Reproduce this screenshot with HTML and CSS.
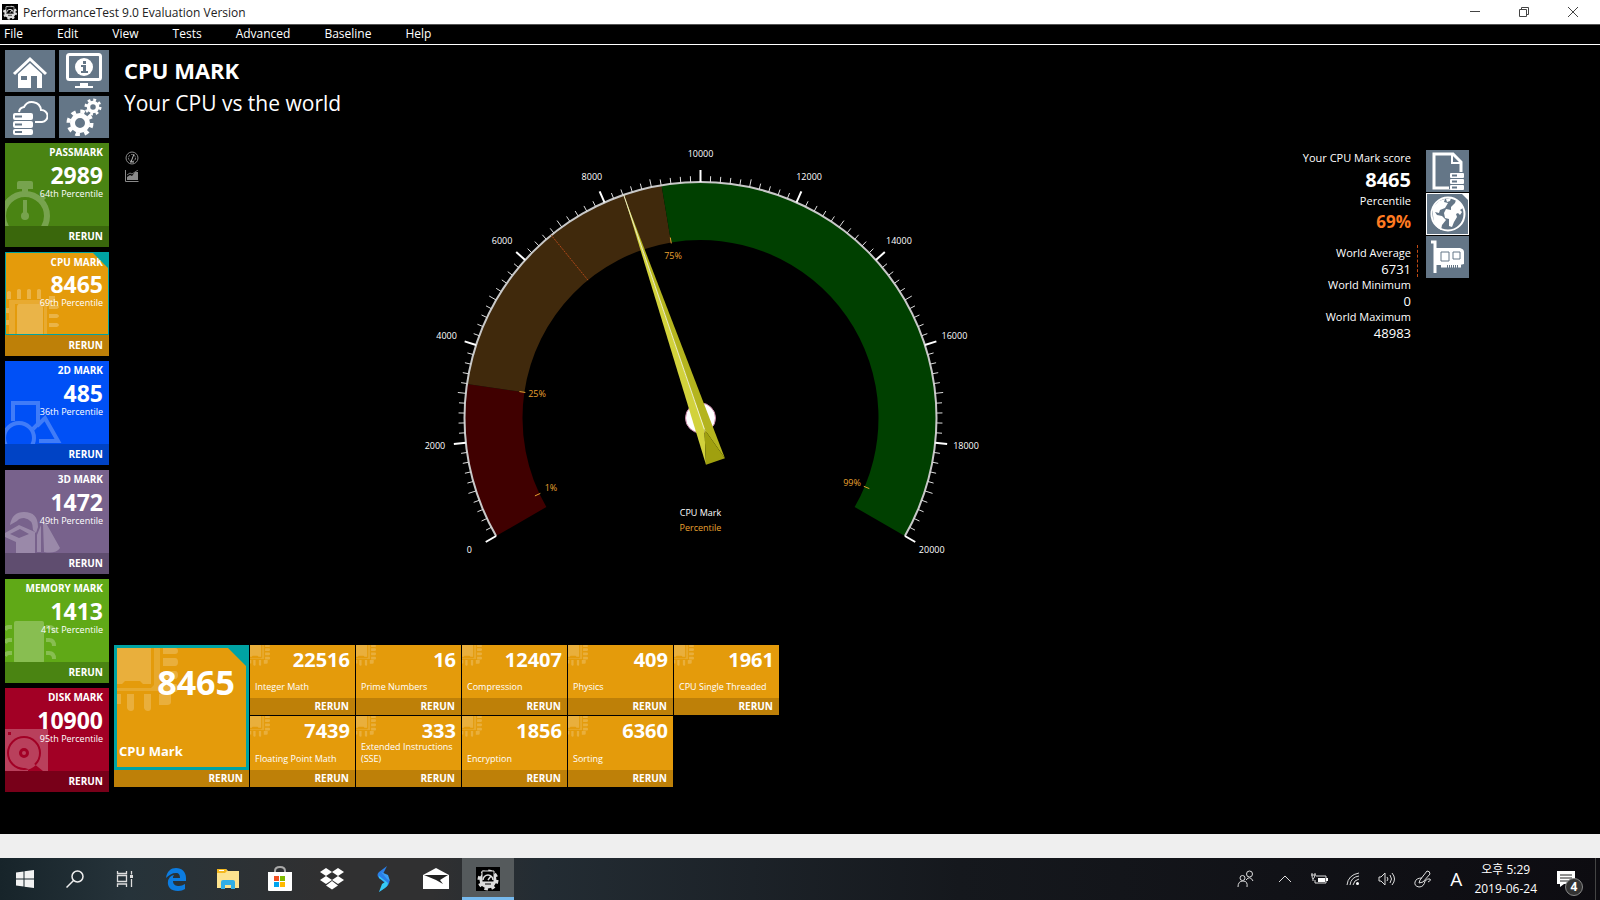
FILE: index.html
```
<!DOCTYPE html>
<html lang="en">
<head>
    <meta charset="UTF-8">
    <meta name="viewport" content="width=device-width, initial-scale=1.0">
    <title>PerformanceTest 9.0 Evaluation Version</title>
    <link rel="stylesheet" href="styles.css">
</head>
<body>
    <!-- shared icons -->
    <svg class="defs" width="0" height="0">
        <symbol id="chip" viewBox="0 0 64 64">
            <path d="M0 0h34v36h-8l-3-3h-15l-3 3h-5z"/>
            <path d="M37 0h6v43h-43v-3h34l3-3z" opacity=".7"/>
            <path d="M46 0h12q3 0 3 3t-3 3h-12zM46 10h12q3 0 3 4t-3 4h-12zM46 23h12q3 0 3 4t-3 4h-12zM46 36h12q3 0 3 4t-3 4h-12z"/>
            <path d="M0 46h4v10h-4zM10 46h7v14q0 3-3 3t-4-3zM27 46h7v14q0 3-3 3t-4-3zM42 46h12v8q0 3-4 3h-8z"/>
        </symbol>
        <symbol id="logo" viewBox="0 0 24 24">
            <path d="M0 0h24v24h-24z" fill="#000"/>
            <circle cx="12" cy="13" r="7" fill="none" stroke="#ddd" stroke-width="3"/>
            <circle cx="12" cy="13" r="9" fill="none" stroke="#ddd" stroke-width="3" stroke-dasharray="3.5 3.57"/>
            <path d="M6 4h12v11h-12z" fill="#000" stroke="#ddd"/>
            <path d="M7 13a5 5 0 0 1 10 0M12 13l3-4" fill="none" stroke="#ddd" stroke-width="1.5"/>
            <path d="M5 15h14l-3 4h-8z" fill="#ddd"/>
            <path d="M9 17h6" stroke="#000"/>
        </symbol>
    </svg>

    <header class="titlebar">
        <svg class="app-icon" width="16" height="16"><use href="#logo"/></svg>
        <span>PerformanceTest 9.0 Evaluation Version</span>
        <div class="window-buttons">
            <button aria-label="Minimize"><svg width="12" height="12"><path d="M1 5.5h10"/></svg></button>
            <button aria-label="Restore"><svg width="12" height="12"><path d="M1.500 3.500h7v7h-7zM3.500 3.500v-2h7v7h-2"/></svg></button>
            <button aria-label="Close"><svg width="12" height="12"><path d="M1 1l10 10M11 1l-10 10"/></svg></button>
        </div>
    </header>

    <nav class="menu">
        <button>File</button>
        <button>Edit</button>
        <button>View</button>
        <button>Tests</button>
        <button>Advanced</button>
        <button>Baseline</button>
        <button>Help</button>
    </nav>

    <main>
        <aside class="sidebar">
            <div class="nav-grid">
                <button class="square" aria-label="Home">
                    <svg width="36" height="36" viewBox="0 0 36 36">
                        <path d="M2 21L18 6l16 15" fill="none" stroke="#fff" stroke-width="3"/>
                        <path d="M6 21L18 10l12 11v14h-5v-12h-6v12h-13z" fill="#fff"/>
                        <path d="M9 23h6v4h-6z" fill="#647687"/>
                    </svg>
                </button>
                <button class="square" aria-label="System information">
                    <svg width="36" height="36" viewBox="0 0 36 36">
                        <rect x="1.500" y="1.500" width="33" height="25" rx="2" fill="none" stroke="#fff" stroke-width="3"/>
                        <circle cx="18" cy="14" r="9" fill="#fff"/>
                        <path d="M14 30h8v3h5v2h-18v-2h5z" fill="#fff"/>
                        <path d="M17 8h3v3h-3zM15 12h5v6h2v2h-7v-2h2v-4h-2z" fill="#647687"/>
                    </svg>
                </button>
                <button class="square" aria-label="Manage baselines">
                    <svg width="36" height="36" viewBox="0 0 36 36">
                        <path d="M7 13a6 6 0 0 1 5-5a9 9 0 0 1 17 3a6 6 0 0 1 1 12h-7" fill="none" stroke="#fff" stroke-width="2"/>
                        <g fill="#fff">
                            <rect x="1" y="14" width="20" height="7" rx="2"/>
                            <rect x="1" y="22" width="20" height="7" rx="2"/>
                            <rect x="1" y="30" width="20" height="6" rx="2"/>
                        </g>
                        <path d="M3 17.500h7M3 25.500h7M3 33h7" stroke="#647687" stroke-width="2"/>
                    </svg>
                </button>
                <button class="square" aria-label="Settings">
                    <svg width="36" height="38" viewBox="0 0 36 38" fill="none" stroke="#fff">
                        <circle cx="14" cy="25" r="7.500" stroke-width="5"/>
                        <circle cx="14" cy="25" r="11.500" stroke-width="4" stroke-dasharray="4.500 4.530"/>
                        <circle cx="27" cy="9" r="4.500" stroke-width="3.500"/>
                        <circle cx="27" cy="9" r="7" stroke-width="3" stroke-dasharray="2.750 2.750"/>
                    </svg>
                </button>
            </div>

            <section class="mark passmark">
                <button class="mark-body">
                    <svg class="art" width="60" height="48" viewBox="0 36 60 48">
                        <path d="M14 39h12q2 0 2 2v6h-5v4h-6v-4h-5v-6q0-2 2-2zM37 52l4 4l-3 3l-4-4z"/>
                        <circle cx="20" cy="74" r="22" fill="none" stroke="#fff" stroke-width="6"/>
                        <path d="M18 58h4v13h-4z"/>
                        <circle cx="20" cy="74" r="4"/>
                    </svg>
                    <span class="mark-name">PASSMARK</span>
                    <span class="mark-score">2989</span>
                    <span class="mark-rank">64th Percentile</span>
                </button>
                <button class="rerun">RERUN</button>
            </section>

            <section class="mark cpu active">
                <button class="mark-body">
                    <svg class="art" width="60" height="48" viewBox="0 36 60 48">
                        <path d="M11 40q2-2 4 0v9h-4zM21 40q2-2 4 0v9h-4zM31 40q2-2 4 0v9h-4zM1 42q2-2 4 0v7h-4z"/>
                        <path d="M3 50h38v34h-38zM9 54v30h29v-27l-3-3z" fill-rule="evenodd" opacity=".6"/>
                        <path d="M13 54h20q4 0 4 4v26h-26v-26q0-4 2-4z"/>
                        <path d="M43 46h6v6h-6zM43 55h8q4 2 0 4h-8zM43 64h8q4 2 0 4h-8zM43 73h8q4 2 0 4h-8zM0 58h3v5h-3zM0 70h3v5h-3z"/>
                    </svg>
                    <span class="mark-name">CPU MARK</span>
                    <span class="mark-score">8465</span>
                    <span class="mark-rank">69th Percentile</span>
                </button>
                <button class="rerun">RERUN</button>
            </section>

            <section class="mark g2d">
                <button class="mark-body">
                    <svg class="art" width="60" height="48" viewBox="0 36 60 48">
                        <g fill="none" stroke="#fff" stroke-width="4">
                            <path d="M8 61v-18h25v21l-5 5"/>
                            <circle cx="14" cy="78" r="15"/>
                            <path d="M32 66l8-8l13 23h-19"/>
                        </g>
                    </svg>
                    <span class="mark-name">2D MARK</span>
                    <span class="mark-score">485</span>
                    <span class="mark-rank">36th Percentile</span>
                </button>
                <button class="rerun">RERUN</button>
            </section>

            <section class="mark g3d">
                <button class="mark-body">
                    <svg class="art" width="60" height="48" viewBox="0 36 60 48">
                        <path d="M5 56q2-13 14-13q14 0 14 15l-2 6l-3-3q0-11-9-12q-5 0-7 3z"/>
                        <path d="M0 64l14-8l16 7v21h-19v-11l-11-5zM5 65l9 4l10-4l-9-5z" fill-rule="evenodd"/>
                        <path d="M38 54h3l14 25q-4 6-16 4zM36 56v27h-4v-17z"/>
                    </svg>
                    <span class="mark-name">3D MARK</span>
                    <span class="mark-score">1472</span>
                    <span class="mark-rank">49th Percentile</span>
                </button>
                <button class="rerun">RERUN</button>
            </section>

            <section class="mark memory">
                <button class="mark-body">
                    <svg class="art" width="60" height="48" viewBox="0 36 60 48">
                        <rect x="9" y="43" width="30" height="42" rx="2"/>
                        <path d="M0 52q1-3 4-3h3M0 65q1-3 4-3h3M0 78q1-3 4-3h3M41 49h3q5 0 5 6M41 62h3q5 0 5 6M41 75h3q5 0 5 6" fill="none" stroke="#fff" stroke-width="4"/>
                    </svg>
                    <span class="mark-name">MEMORY MARK</span>
                    <span class="mark-score">1413</span>
                    <span class="mark-rank">41st Percentile</span>
                </button>
                <button class="rerun">RERUN</button>
            </section>

            <section class="mark disk">
                <button class="mark-body">
                    <svg class="art" width="60" height="48" viewBox="0 36 60 48">
                        <path d="M0 42h43v42h-5l-10-8q-6-2-11-1q-3 2 0 5l6 2v2h-23zM3 45v3h3v-3zM19 49a17 17 0 1 0 17 17a17 17 0 0 0-17-17z" fill-rule="evenodd"/>
                        <path d="M19 51a15 15 0 1 0 0 30a15 15 0 1 0 0-30zM19 61a5 5 0 1 1 0 10a5 5 0 1 1 0-10z" fill-rule="evenodd"/>
                        <circle cx="19" cy="66" r="2"/>
                    </svg>
                    <span class="mark-name">DISK MARK</span>
                    <span class="mark-score">10900</span>
                    <span class="mark-rank">95th Percentile</span>
                </button>
                <button class="rerun">RERUN</button>
            </section>
        </aside>

        <div class="content">
            <div class="heading">
                <h1>CPU MARK</h1>
                <h2>Your CPU vs the world</h2>
            </div>

            <div class="dashboard">
                <div class="chart-types">
                    <button aria-label="Gauge">
                        <svg width="14" height="14" viewBox="0 0 14 14" fill="none" stroke="#8a8a8a">
                            <circle cx="7" cy="7" r="6"/>
                            <circle cx="7" cy="7" r="3.500" stroke-dasharray="2 1"/>
                            <path d="M6 11l3-8M5 11h4" stroke="#bbb"/>
                        </svg>
                    </button>
                    <button aria-label="Distribution">
                        <svg width="14" height="12" viewBox="0 0 14 12">
                            <path d="M.5 0v11.500h13" fill="none" stroke="#8a8a8a"/>
                            <path d="M2 10v-3l3-2l2 1l3-4h3v8z" fill="#8a8a8a"/>
                            <path d="M2 5l3-2l2 1l6-4" fill="none" stroke="#777"/>
                        </svg>
                    </button>
                </div>

                <div class="gauge">
                    <svg id="gauge" width="560" height="430" viewBox="0 0 560 430"></svg>
                </div>

                <div class="score-panel">
                    <dl class="scores">
                        <dt>Your CPU Mark score</dt>
                        <dd class="score">8465</dd>
                        <dt>Percentile</dt>
                        <dd class="percentile">69%</dd>
                        <div class="average">
                            <dt>World Average</dt>
                            <dd>6731</dd>
                        </div>
                        <dt>World Minimum</dt>
                        <dd>0</dd>
                        <dt>World Maximum</dt>
                        <dd>48983</dd>
                    </dl>
                    <div class="compare">
                        <button class="square" aria-label="Baselines">
                            <svg width="34" height="38" viewBox="0 0 34 38">
                                <path d="M3 2h19l8 8v26h-27z" fill="none" stroke="#fff" stroke-width="3"/>
                                <path d="M21 2v9h9" fill="none" stroke="#fff" stroke-width="2"/>
                                <path d="M18 20h14v17h-14z" fill="#647687"/>
                                <g fill="#fff">
                                    <rect x="19" y="21" width="14" height="5" rx="1"/>
                                    <rect x="19" y="27" width="14" height="5" rx="1"/>
                                    <rect x="19" y="33" width="14" height="5" rx="1"/>
                                </g>
                                <path d="M21 23.500h5M21 29.500h5M21 35.500h5" stroke="#647687" stroke-width="2"/>
                            </svg>
                        </button>
                        <button class="square selected" aria-label="World">
                            <svg width="38" height="38" viewBox="0 0 38 38">
                                <circle cx="19" cy="19" r="16.500" fill="none" stroke="#fff" stroke-width="2"/>
                                <path d="M4 12l6-6l6-2l-1 3l4 1l-3 5l-5 2l-1 3l-4-1l2 3l5 1l4 4l-4 5l-1 5q-8-4-8-15zM17 4l5-1l-1 3l-3 1zM22 12l4-4l1-3q6 3 7 8l-3 2l2 2l-2 3l-2-2l-2 1l1 3l-3 5l-2 5l-3-1v-7l-4-1l-1-5l2-4l5 1z" fill="#fff"/>
                            </svg>
                        </button>
                        <button class="square" aria-label="Hardware">
                            <svg width="38" height="38" viewBox="0 0 38 38">
                                <path d="M2 4h4v31" fill="none" stroke="#fff" stroke-width="3"/>
                                <path d="M7 10h24q4 1 4 4v12l-4 1h-24z" fill="#fff"/>
                                <path d="M12 28h20" stroke="#fff" stroke-width="3" stroke-dasharray="6 1 1 1 1 1 1 1 1 1 1 1"/>
                                <path d="M12 14h8v9h-8zM24 14h7v7h-7z" fill="#fff" stroke="#647687"/>
                            </svg>
                        </button>
                    </div>
                </div>
            </div>

            <div class="tests">
                <section class="test main-test">
                    <button class="test-body">
                        <svg class="chip" width="64" height="64"><use href="#chip"/></svg>
                        <span class="test-score">8465</span>
                        <span class="test-name">CPU Mark</span>
                    </button>
                    <button class="rerun">RERUN</button>
                </section>
                <section class="test">
                    <button class="test-body">
                        <svg class="chip" width="21" height="21"><use href="#chip"/></svg>
                        <span class="test-score">22516</span>
                        <span class="test-name">Integer Math</span>
                    </button>
                    <button class="rerun">RERUN</button>
                </section>
                <section class="test">
                    <button class="test-body">
                        <svg class="chip" width="21" height="21"><use href="#chip"/></svg>
                        <span class="test-score">16</span>
                        <span class="test-name">Prime Numbers</span>
                    </button>
                    <button class="rerun">RERUN</button>
                </section>
                <section class="test">
                    <button class="test-body">
                        <svg class="chip" width="21" height="21"><use href="#chip"/></svg>
                        <span class="test-score">12407</span>
                        <span class="test-name">Compression</span>
                    </button>
                    <button class="rerun">RERUN</button>
                </section>
                <section class="test">
                    <button class="test-body">
                        <svg class="chip" width="21" height="21"><use href="#chip"/></svg>
                        <span class="test-score">409</span>
                        <span class="test-name">Physics</span>
                    </button>
                    <button class="rerun">RERUN</button>
                </section>
                <section class="test">
                    <button class="test-body">
                        <svg class="chip" width="21" height="21"><use href="#chip"/></svg>
                        <span class="test-score">1961</span>
                        <span class="test-name">CPU Single Threaded</span>
                    </button>
                    <button class="rerun">RERUN</button>
                </section>
                <section class="test">
                    <button class="test-body">
                        <svg class="chip" width="21" height="21"><use href="#chip"/></svg>
                        <span class="test-score">7439</span>
                        <span class="test-name">Floating Point Math</span>
                    </button>
                    <button class="rerun">RERUN</button>
                </section>
                <section class="test">
                    <button class="test-body">
                        <svg class="chip" width="21" height="21"><use href="#chip"/></svg>
                        <span class="test-score">333</span>
                        <span class="test-name">Extended Instructions (SSE)</span>
                    </button>
                    <button class="rerun">RERUN</button>
                </section>
                <section class="test">
                    <button class="test-body">
                        <svg class="chip" width="21" height="21"><use href="#chip"/></svg>
                        <span class="test-score">1856</span>
                        <span class="test-name">Encryption</span>
                    </button>
                    <button class="rerun">RERUN</button>
                </section>
                <section class="test">
                    <button class="test-body">
                        <svg class="chip" width="21" height="21"><use href="#chip"/></svg>
                        <span class="test-score">6360</span>
                        <span class="test-name">Sorting</span>
                    </button>
                    <button class="rerun">RERUN</button>
                </section>
            </div>
        </div>
    </main>

    <div class="statusbar"></div>

    <footer class="taskbar">
        <div class="apps">
            <button aria-label="Start">
                <svg width="18" height="18" viewBox="0 0 18 18" fill="#f2f2f2"><path d="M0 2.500l7.500-1v7h-7.500zM8.500 1.300l9.500-1.300v8.500h-9.500zM0 9.500h7.500v7l-7.500-1zM8.500 9.500h9.500v8.500l-9.500-1.300z"/></svg>
            </button>
            <button aria-label="Search">
                <svg width="18" height="18" viewBox="0 0 18 18" fill="none" stroke="#eee" stroke-width="1.500"><circle cx="11.500" cy="6.500" r="5.500"/><path d="M7.500 10.500l-7 7"/></svg>
            </button>
            <button aria-label="Task view">
                <svg width="18" height="18" viewBox="0 0 18 18" fill="none" stroke="#ddd" stroke-width="1.300"><path d="M1.500 1v2.500h9v-2.500M1.500 17v-3h9v3M1.500 5.500h9v6h-9zM15.500 1v3.500M15.500 9v8"/><path d="M14 5h3v3h-3z" fill="#ddd" stroke="none"/></svg>
            </button>
            <button class="app" aria-label="Edge">
                <svg width="22" height="24" viewBox="0 0 22 24"><path d="M1 11C2 4 6 1 11 1c6 0 10 4 10 10v3h-13c0 4 3 5 6 5c2 0 4-1 6-2v5c-2 1-4 2-7 2C6 24 2 20 3 14c1-4 4-6 6-6c-1 1-1 2-1 3h7c0-3-1-5-4-5c-4 0-7 2-10 5z" fill="#0c7ce0"/></svg>
            </button>
            <button class="app" aria-label="File Explorer">
                <svg width="24" height="22" viewBox="0 0 24 22"><path d="M1 1h9l2 2h11v17h-22z" fill="#fde38f"/><path d="M1 1h9l1 2l-2 2h-8z" fill="#f5b91f"/><path d="M3 2h5v1h-5z" fill="#fff"/><path d="M5 20v-6q0-2 2-2h10q2 0 2 2v7h-4v-4h-6v4h-4z" fill="#31aee6"/></svg>
            </button>
            <button class="app" aria-label="Store">
                <svg width="26" height="26" viewBox="0 0 26 26"><path d="M8 7v-2q0-4 5-4t5 4v2" fill="none" stroke="#aaa" stroke-width="2"/><path d="M1 6h24v18q0 1-1 1h-22q-1 0-1-1z" fill="#fff"/><path d="M7 10h5v5h-5z" fill="#f25022"/><path d="M13 10h5v5h-5z" fill="#7fba00"/><path d="M7 16h5v5h-5z" fill="#00a4ef"/><path d="M13 16h5v5h-5z" fill="#ffb900"/></svg>
            </button>
            <button class="app" aria-label="Dropbox">
                <svg width="24" height="22" viewBox="0 0 24 22" fill="#fff"><path d="M6 0l6 4l-6 4l-6-4zM18 0l6 4l-6 4l-6-4zM6 8l6 4l-6 4l-6-4zM18 8l6 4l-6 4l-6-4zM12 13l6 4.500l-6 4l-6-4z"/></svg>
            </button>
            <button class="app" aria-label="S app">
                <svg width="16" height="26" viewBox="0 0 16 26"><path d="M11 0l-8 6q-3 3 0 6l6 5l-6 9l7-5q6-5 2-9l-5-4z" fill="#2a7fe8"/><path d="M3 10l9 7q0 3-3 5l-6 4l3-8l3-2l-6-4z" fill="#36c9f5"/><path d="M5 6l7 3l2 6l-3-2z" fill="#3aa0f5"/></svg>
            </button>
            <button class="app" aria-label="Mail">
                <svg width="26" height="22" viewBox="0 0 26 22"><path d="M0 7l13-7l13 7v14h-26z" fill="#fff"/><path d="M1 7h24l-8 5l3 4l-7-4z" fill="#222"/></svg>
            </button>
            <button class="app running" aria-label="PerformanceTest">
                <svg width="24" height="24"><use href="#logo"/></svg>
            </button>
        </div>
        <div class="tray">
            <button class="people" aria-label="People">
                <svg width="18" height="18" viewBox="0 0 18 18"><circle cx="5.500" cy="8" r="2.500"/><path d="M1 17q0-6 5-6t4 6"/><circle cx="12.500" cy="4" r="3"/><path d="M9 10q4-5 7 1"/></svg>
            </button>
            <button aria-label="Show hidden icons">
                <svg width="14" height="10" viewBox="0 0 14 10"><path d="M1 8l6-6l6 6"/></svg>
            </button>
            <button aria-label="Battery">
                <svg width="18" height="14" viewBox="0 0 18 14"><path d="M6 4h10v7h-11v-3"/><path class="solid" d="M8 6h7v4h-7zM16 6h2v3h-2z"/><path d="M1 3h5M2 1v2q0 3 1 4v2M5 1v2q0 2-2 4"/></svg>
            </button>
            <button aria-label="Network">
                <svg width="14" height="14" viewBox="0 0 14 14"><path d="M1 13Q2 3 13 1M4 13q1-8 9-9M7 13q1-5 6-6"/><circle class="solid" cx="11.500" cy="11.500" r="1.500"/></svg>
            </button>
            <button aria-label="Volume">
                <svg width="18" height="14" viewBox="0 0 18 14"><path d="M1 5h2l4-4v12l-4-4h-2zM9 5q2 2 0 4M12 3q3 4 0 8M14 1q5 6 0 12"/></svg>
            </button>
            <button aria-label="Ink workspace">
                <svg width="18" height="18" viewBox="0 0 18 18"><path d="M6 10l7-9q3 0 3 3l-7 8l-4 1zM8 8q-6 0-7 4t4 5q5 0 6-6q3-3 5-2t-2 3"/></svg>
            </button>
            <button class="lang" aria-label="Input language">A</button>
            <div class="clock">
                <span lang="ko">오후 5:29</span>
                <span>2019-06-24</span>
            </div>
            <button class="notifications" aria-label="Notifications">
                <svg width="18" height="18" viewBox="0 0 18 18"><path class="solid" d="M0 1h18v13h-11l-4 3v-3h-3z"/><path class="lines" d="M3 5h12M3 8h12M3 11h8"/></svg>
                <span class="count">4</span>
            </button>
        </div>
    </footer>

    <script>
        const gauge = document.getElementById('gauge');
        const cx = 280.5, cy = 278, radius = 236;
        const inner = 178;
        const max = 20000;

        // 0 is straight up, the scale runs from -120 to 120 degrees
        function point(angle, r) {
            const a = angle * Math.PI / 180;
            return [cx + r * Math.sin(a), cy - r * Math.cos(a)];
        }

        function angleOf(value) {
            return value / max * 240 - 120;
        }

        function add(name, attrs, text) {
            const el = document.createElementNS('http://www.w3.org/2000/svg', name);
            for (const key in attrs) {
                el.setAttribute(key, attrs[key]);
            }
            if (text) el.textContent = text;
            gauge.appendChild(el);
        }

        function arc(from, to, r1, r2, color) {
            const large = to - from > 180 ? 1 : 0;
            add('path', {
                d: `M${point(from, r1)} A${r1} ${r1} 0 ${large} 1 ${point(to, r1)} L${point(to, r2)} A${r2} ${r2} 0 ${large} 0 ${point(from, r2)} Z`,
                fill: color
            });
        }

        function line(angle, r1, r2, cls) {
            const [x1, y1] = point(angle, r1);
            const [x2, y2] = point(angle, r2);
            add('line', { x1, y1, x2, y2, class: cls });
        }

        // coloured bands
        arc(-120, -81.7, radius, inner, '#400000');
        arc(-81.7, -9.5, radius, inner, '#40290c');
        arc(-9.5, 120, radius, inner, '#004000');
        arc(-120, 120, radius + 1, radius - 1, '#c8c8c8');

        // scale
        for (let i = 0; i <= 100; i++) {
            const angle = angleOf(i * 200);
            if (i % 10 === 0) {
                line(angle, radius, radius + 12, 'major');
                const a = angle * Math.PI / 180;
                add('text', { x: cx + 267 * Math.sin(a), y: cy + 3 - 264 * Math.cos(a), class: 'label' }, String(i * 200));
            } else {
                line(angle, radius, radius + (i % 5 === 0 ? 8 : 6), 'minor');
            }
        }

        // world average
        line(angleOf(6731), inner, radius, 'average-line');

        // percentiles
        const percentiles = [
            ['1%', -115.2, 131, 351],
            ['25%', -81.7, 117, 257],
            ['75%', -9.5, 253, 119],
            ['99%', 112.7, 432, 346]
        ];
        percentiles.forEach(([text, angle, x, y]) => {
            line(angle, inner - 1, inner + 5, 'percent-tick');
            add('text', { x, y, class: 'label percent' }, text);
        });

        // needle
        add('circle', { cx, cy, r: 15, class: 'hub' });
        const turn = `translate(${cx} ${cy}) rotate(-19)`;
        add('path', { d: 'M0 -236L-10 46L0 12Z', fill: '#d2d23c', transform: turn });
        add('path', { d: 'M0 -236L10 46L0 12Z', fill: '#b4b41e', transform: turn });
        add('path', { d: 'M0 12L-10 46H10Z', fill: '#a0a00f', transform: turn });
        add('path', { d: 'M0 -236V12', stroke: '#f0f0c8', transform: turn });

        add('text', { x: cx, y: 376, class: 'label' }, 'CPU Mark');
        add('text', { x: cx, y: 391, class: 'label percent' }, 'Percentile');
    </script>
</body>
</html>
```
FILE: styles.css
```
* {
    box-sizing: border-box;
}

body {
    display: flex;
    flex-direction: column;
    min-height: 100vh;
    margin: 0;
    background-color: #000;
    color: #fff;
    font-family: "Open Sans", "Noto Sans CJK KR", sans-serif;
    font-size: 12px;
}

button {
    padding: 0;
    border: none;
    background: none;
    color: inherit;
    font: inherit;
    cursor: pointer;
}

svg {
    display: block;
}

.defs {
    position: absolute;
}

/* title bar and menu */
.titlebar {
    display: flex;
    align-items: center;
    gap: 5px;
    height: 25px;
    padding-left: 2px;
    border-bottom: 1px solid #555;
    background-color: #fff;
    color: #222;
}

.window-buttons {
    display: flex;
    margin-left: auto;
    padding-right: 3px;
}

.window-buttons button {
    display: flex;
    align-items: center;
    justify-content: center;
    width: 49px;
    height: 24px;
}

.window-buttons path {
    fill: none;
    stroke: #444;
}

.menu {
    display: flex;
    gap: 34px;
    height: 20px;
    padding-left: 4px;
    border-bottom: 1px solid #fff;
}

.menu button {
    line-height: 18px;
    height: 18px;
}

/* layout */
main {
    display: flex;
    flex: 1;
}

.sidebar {
    display: flex;
    flex-direction: column;
    gap: 5px;
    width: 109px;
    padding: 5px 0 5px 5px;
}

.content {
    display: flex;
    flex: 1;
    flex-direction: column;
    padding-left: 5px;
}

.nav-grid {
    display: grid;
    grid-template-columns: 1fr 1fr;
    grid-auto-rows: 42px;
    gap: 4px;
}

.square {
    display: flex;
    align-items: center;
    justify-content: center;
    background-color: #647687;
}

/* sidebar tiles */
.mark {
    display: flex;
    flex-direction: column;
    height: 104px;
    background-color: var(--tile);
}

.mark-body {
    position: relative;
    display: flex;
    flex: 1;
    flex-direction: column;
    align-items: flex-end;
    padding-right: 6px;
    overflow: hidden;
}

.art {
    position: absolute;
    left: 0;
    bottom: 0;
    fill: #fff;
    opacity: 0.25;
}

.mark-name,
.mark-score,
.mark-rank {
    position: relative;
}

.mark-name {
    font-size: 10px;
    font-weight: bold;
    line-height: 19px;
}

.mark-score {
    font-size: 23px;
    font-weight: bold;
    line-height: 26px;
}

.mark-rank {
    font-size: 9px;
    line-height: 11px;
}

.rerun {
    padding-right: 6px;
    background-color: var(--tile-dark);
    font-size: 10px;
    font-weight: bold;
    text-align: right;
}

.mark .rerun {
    height: 21px;
    padding-bottom: 2px;
}

.passmark { --tile: #4a8413; --tile-dark: #3a670c; }
.cpu, .tests { --tile: #e49b0b; --tile-dark: #be8008; }
.g2d { --tile: #0050f6; --tile-dark: #0043c5; }
.g3d { --tile: #78628c; --tile-dark: #5f4d6f; }
.memory { --tile: #60a917; --tile-dark: #4a8412; }
.disk { --tile: #a20025; --tile-dark: #780019; }

.active .mark-body {
    border: 1px solid #00a3a3;
    padding-right: 5px;
}

.active .mark-name {
    line-height: 18px;
}

.active .mark-body::after,
.main-test .test-body::after {
    content: "";
    position: absolute;
    top: 0;
    right: 0;
    width: 15px;
    height: 15px;
    background-color: #00a3a3;
    clip-path: polygon(0 0, 100% 0, 100% 100%);
}

/* heading */
.heading {
    height: 95px;
    padding: 10px 0 0 10px;
}

h1, h2 {
    margin: 0;
    line-height: 31px;
}

h1 {
    font-size: 22px;
}

h2 {
    margin-top: 2px;
    font-size: 21px;
    font-weight: normal;
}

/* gauge row */
.dashboard {
    display: flex;
    flex: 1;
    padding: 0 131px 0 11px;
}

.chart-types {
    display: flex;
    flex-direction: column;
    gap: 5px;
    width: 14px;
    padding-top: 11px;
}

.gauge {
    display: flex;
    flex: 1;
    justify-content: center;
}

.label {
    fill: #fff;
    font-size: 9px;
    text-anchor: middle;
}

.percent {
    fill: #e8a030;
}

.major {
    stroke: #fff;
    stroke-width: 2;
}

.minor {
    stroke: #ddd;
}

.percent-tick {
    stroke: #e8a030;
}

.average-line {
    stroke: #b04818;
    stroke-dasharray: 2 1;
}

.hub {
    fill: #fff;
    stroke: #c8a;
}

.score-panel {
    display: flex;
    align-items: flex-start;
    justify-content: flex-end;
    gap: 15px;
    width: 208px;
    padding-top: 10px;
}

.scores {
    margin: 0;
    text-align: right;
}

.scores dt {
    font-size: 11px;
    line-height: 16px;
}

.scores dd {
    margin: 0;
    font-size: 13px;
    line-height: 16px;
}

.scores .score {
    font-size: 20px;
    font-weight: bold;
    line-height: 27px;
}

.scores .percentile {
    margin-bottom: 11px;
    color: #ff7a21;
    font-size: 17px;
    font-weight: bold;
    line-height: 25px;
}

.average {
    position: relative;
}

.average::after {
    content: "";
    position: absolute;
    top: 0;
    right: -7px;
    height: 32px;
    border-right: 1px dashed #c04a14;
}

.compare {
    display: flex;
    flex-direction: column;
    gap: 1px;
}

.compare .square {
    width: 43px;
    height: 42px;
}

.compare .selected {
    position: relative;
    border: 1px solid #fff;
}

.selected::after {
    content: "";
    position: absolute;
    top: 0;
    right: 0;
    width: 6px;
    height: 6px;
    background-color: #fff;
    clip-path: polygon(0 0, 100% 0, 100% 100%);
}

/* test tiles */
.tests {
    display: grid;
    grid-template-columns: 135px repeat(5, 105px);
    grid-template-rows: 70px 71px;
    gap: 1px;
    margin-bottom: 47px;
}

.test {
    display: flex;
    flex-direction: column;
    background-color: var(--tile);
}

.test-body {
    position: relative;
    display: flex;
    flex: 1;
    flex-direction: column;
    justify-content: space-between;
    padding: 5px 5px 5px 5px;
    text-align: left;
}

.chip {
    position: absolute;
    top: 0;
    left: 0;
    fill: #fff;
    opacity: 0.2;
}

.test-score,
.test-name {
    position: relative;
}

.test-score {
    align-self: flex-end;
    font-size: 20px;
    font-weight: bold;
    line-height: 20px;
}

.test-name {
    font-size: 9px;
    line-height: 12px;
}

.test .rerun {
    height: 17px;
    padding-bottom: 1px;
}

.main-test {
    grid-row: span 2;
}

.main-test .test-body {
    padding: 14px 11px 8px 2px;
    border: 3px solid #00a3a3;
}

.main-test .test-score {
    font-size: 34px;
    line-height: 40px;
}

.main-test .test-name {
    font-size: 13px;
    font-weight: bold;
    line-height: 16px;
}

.main-test .test-body::after {
    width: 18px;
    height: 18px;
}

/* bottom bars */
.statusbar {
    height: 24px;
    background-color: #efefef;
}

.taskbar {
    display: flex;
    justify-content: space-between;
    height: 42px;
    background: linear-gradient(to right, #17242a, #26333a 8%, #303031 20%, #303031 27%, #232c33 34%, #15181d 60%, #0d0c11);
}

.apps,
.tray {
    display: flex;
}

.apps button {
    display: flex;
    align-items: center;
    justify-content: center;
    width: 50px;
}

.apps .app {
    width: 52px;
}

.apps .running {
    padding-top: 3px;
    border-bottom: 3px solid #76b9ed;
    background-color: #555a5c;
}

.tray {
    align-items: center;
    gap: 18px;
    margin-right: 4px;
    padding-right: 20px;
    border-right: 1px solid #444;
}

.tray path,
.tray circle {
    fill: none;
    stroke: #ddd;
}

.tray .solid {
    fill: #fff;
    stroke: none;
}

.tray .lines {
    stroke: #222;
}

.people {
    margin-right: 5px;
}

.lang {
    font-size: 19px;
}

.clock {
    display: flex;
    flex-direction: column;
    align-items: center;
    margin: 0 2px 0 -6px;
    line-height: 19px;
}

.notifications {
    position: relative;
}

.count {
    position: absolute;
    left: 8px;
    top: 8px;
    width: 18px;
    height: 18px;
    border: 1px solid #888;
    border-radius: 50%;
    background-color: #333;
    font-weight: bold;
    line-height: 16px;
}
```
